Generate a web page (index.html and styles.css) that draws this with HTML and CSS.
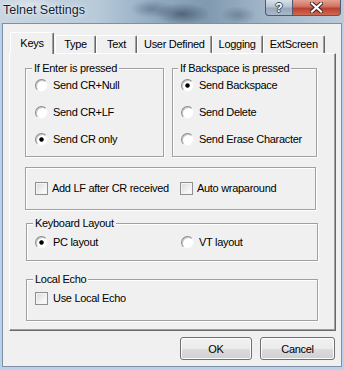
FILE: index.html
```html
<!DOCTYPE html>
<html lang="en">
<head>
  <meta charset="UTF-8" />
  <title>Telnet Settings</title>
  <link rel="stylesheet" href="styles.css">
</head>
<body>
  <div class="window">
    <div class="titlebar">
      <span class="title">Telnet Settings</span>
      <div class="caption-btns">
        <span class="cap help">?</span>
        <span class="cap close">
          <svg width="13" height="11" viewBox="0 0 13 11">
            <path d="M2 1.5 L11 9.5 M11 1.5 L2 9.5" stroke="#3a1f1c" stroke-width="4" stroke-linecap="square"/>
            <path d="M2 1.5 L11 9.5 M11 1.5 L2 9.5" stroke="#ffffff" stroke-width="2.2" stroke-linecap="square"/>
          </svg>
        </span>
      </div>
    </div>

    <div class="client">
      <div class="tabs">
        <div class="tab active">Keys</div>
        <div class="tab">Type</div>
        <div class="tab">Text</div>
        <div class="tab">User Defined</div>
        <div class="tab">Logging</div>
        <div class="tab">ExtScreen</div>
      </div>

      <div class="panel">
        <div class="group-row">
          <div class="group enter">
            <div class="legend">If Enter is pressed</div>
            <div class="opts">
              <label class="opt"><span class="radio"></span>Send CR+Null</label>
              <label class="opt"><span class="radio"></span>Send CR+LF</label>
              <label class="opt"><span class="radio checked"></span>Send CR only</label>
            </div>
          </div>
          <div class="group backspace">
            <div class="legend">If Backspace is pressed</div>
            <div class="opts">
              <label class="opt"><span class="radio checked"></span>Send Backspace</label>
              <label class="opt"><span class="radio"></span>Send Delete</label>
              <label class="opt"><span class="radio"></span>Send Erase Character</label>
            </div>
          </div>
        </div>

        <div class="group lf">
          <div class="opts inline">
            <label class="opt wide"><span class="check"></span>Add LF after CR received</label>
            <label class="opt"><span class="check"></span>Auto wraparound</label>
          </div>
        </div>

        <div class="group keyboard">
          <div class="legend">Keyboard Layout</div>
          <div class="opts inline">
            <label class="opt wide"><span class="radio checked"></span>PC layout</label>
            <label class="opt"><span class="radio"></span>VT layout</label>
          </div>
        </div>

        <div class="group echo">
          <div class="legend">Local Echo</div>
          <div class="opts inline">
            <label class="opt"><span class="check"></span>Use Local Echo</label>
          </div>
        </div>
      </div>

      <div class="buttons">
        <button class="btn ok">OK</button>
        <button class="btn cancel">Cancel</button>
      </div>
    </div>
  </div>
</body>
</html>
```

FILE: styles.css
```css
body {
  margin: 0;
  width: 344px;
  height: 370px;
  overflow: hidden;
  background: #b9d1ea;
  font-family: "Liberation Sans", Arial, sans-serif;
  font-size: 11px;
  letter-spacing: -0.3px;
  color: #000;
}

/* Aero title bar */
.titlebar {
  height: 23px;
  display: flex;
  align-items: flex-start;
  background:
    radial-gradient(ellipse 28px 11px at 182px 14px, rgba(35, 50, 70, 0.55), transparent),
    radial-gradient(ellipse 22px 9px at 152px 9px, rgba(50, 70, 92, 0.4), transparent),
    radial-gradient(ellipse 18px 9px at 238px 15px, rgba(50, 70, 92, 0.35), transparent),
    radial-gradient(ellipse 30px 8px at 30px 4px, rgba(255, 255, 255, 0.35), transparent),
    linear-gradient(to right, #c9d6e2 0, #b8cad9 28%, #93abc1 45%, #8099af 60%, #a0b4c7 76%, #bccbd9 100%);
}

.title {
  padding: 3px 0 0 3px;
  font-size: 12.5px;
  letter-spacing: 0;
  color: #142030;
  text-shadow: 0 0 6px rgba(255, 255, 255, 0.9), 0 0 2px rgba(255, 255, 255, 0.8);
}

.caption-btns {
  margin-left: auto;
  margin-right: 3px;
  display: flex;
}

.cap {
  height: 15px;
  display: flex;
  align-items: center;
  justify-content: center;
  border: 1px solid #4d5b6c;
  border-top: none;
}

.help {
  width: 26px;
  border-right: none;
  border-radius: 0 0 0 4px;
  background: linear-gradient(#d8e0e8 0, #b5c3d1 45%, #97a8ba 55%, #a9b9c9 100%);
  color: #fff;
  font-weight: bold;
  font-size: 12px;
  letter-spacing: 0;
  text-shadow: 1px 0 0 #3b4756, -1px 0 0 #3b4756, 0 1px 0 #3b4756, 0 -1px 0 #3b4756;
}

.close {
  width: 47px;
  border-radius: 0 0 4px 0;
  background: linear-gradient(#e3a092 0, #d0705f 45%, #bc3f2c 55%, #cf6a52 100%);
}

/* client area */
.client {
  margin: 0 2px;
  height: 344px;
  box-sizing: border-box;
  border: 1px solid #7d90a6;
  background: #f0f0f0;
  padding: 8px 5px 0 6px;
}

.tabs {
  display: flex;
  align-items: flex-end;
  height: 22px;
  margin-bottom: -1px;
  padding-left: 1px;
  position: relative;
  z-index: 1;
}

.tab {
  height: 18px;
  min-width: 41px;
  margin-bottom: 1px;
  padding: 0 6px 1px;
  box-sizing: border-box;
  display: flex;
  align-items: center;
  justify-content: center;
  border: 1px solid;
  border-color: #fff #696969 transparent #fff;
  border-bottom: none;
  border-radius: 2px 2px 0 0;
  box-shadow: inset -1px 0 0 #a0a0a0;
  background: #f0f0f0;
}

.tab.active {
  height: 22px;
  min-width: 44px;
  margin: 0 1px 0 0;
  padding-bottom: 2px;
}

.panel {
  height: 278px;
  box-sizing: border-box;
  border: 1px solid;
  border-color: #fff #696969 #696969 #fff;
  box-shadow: inset -1px -1px 0 #a0a0a0;
  padding: 14px 0 0 15px;
}

/* etched group boxes */
.group {
  box-sizing: border-box;
  border: 1px solid #a0a0a0;
  box-shadow: 1px 1px 0 #fff, inset 1px 1px 0 #fff;
}

.group-row {
  display: flex;
  gap: 8px;
}

.enter { width: 139px; height: 89px; }
.backspace { width: 145px; height: 89px; }
.lf { width: 291px; height: 43px; margin-top: 10px; }
.keyboard { width: 292px; height: 38px; margin: 13px 0 0 1px; }
.echo { width: 292px; height: 42px; margin: 18px 0 0 1px; }

.legend {
  display: table;
  margin: -7px 0 0 6px;
  padding: 0 2px;
  line-height: 13px;
  background: #f0f0f0;
}

.backspace .legend { margin-left: 5px; }

.opts {
  display: flex;
  flex-direction: column;
  gap: 13px;
  padding: 3px 0 0 9px;
}

.backspace .opts { padding-left: 8px; }

.opts.inline {
  flex-direction: row;
  gap: 0;
}

.lf .opts { padding-top: 13px; }
.keyboard .opts, .echo .opts { padding: 5px 0 0 8px; }

.opt {
  height: 14px;
  display: flex;
  align-items: center;
  gap: 5px;
  white-space: nowrap;
}

.lf .opt { gap: 4px; }
.lf .wide { width: 145px; }
.keyboard .wide { width: 146px; }

.radio {
  width: 13px;
  height: 13px;
  box-sizing: border-box;
  border-radius: 50%;
  border: 1px solid;
  border-color: #8a8a8a #f4f4f4 #f4f4f4 #8a8a8a;
  box-shadow: inset 1px 1px 0 #c6c6c6;
  background: #fff;
}

.radio.checked {
  background: radial-gradient(circle at 50% 50%, #000 0, #000 1.8px, #fff 2.6px);
}

.check {
  width: 13px;
  height: 13px;
  box-sizing: border-box;
  border: 1px solid #8e8f8f;
  background: linear-gradient(135deg, #d8d8d8, #f6f6f6 70%, #fff);
  box-shadow: inset 0 0 0 1px #f4f4f4;
}

/* dialog buttons */
.buttons {
  display: flex;
  justify-content: flex-end;
  gap: 8px;
  margin: 6px 1px 0 0;
}

.btn {
  height: 23px;
  box-sizing: border-box;
  border: 1px solid #707070;
  border-radius: 3px;
  background: linear-gradient(#f2f2f2 0, #ebebeb 50%, #dddddd 51%, #cfcfcf 100%);
  box-shadow: inset 0 0 0 1px #fcfcfc;
  font-family: inherit;
  font-size: 11px;
  letter-spacing: -0.3px;
  color: #000;
  padding: 0;
}

.ok { width: 72px; }
.cancel { width: 75px; }
```
